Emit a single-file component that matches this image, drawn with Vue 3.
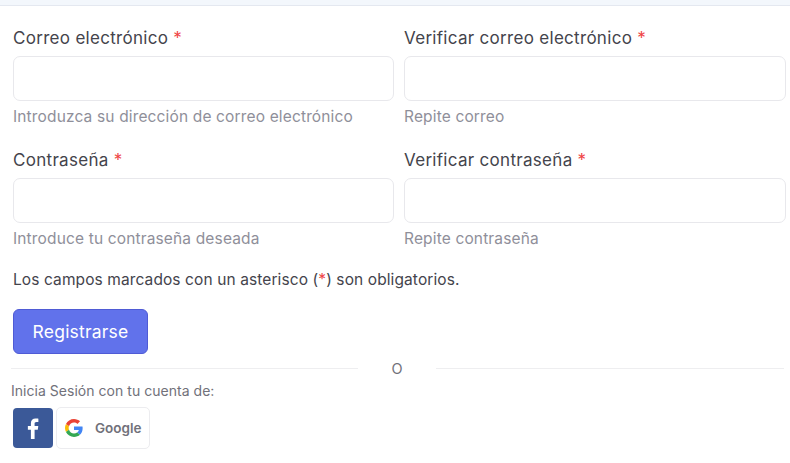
<template>
  <div class="page">
    <div class="top-strip"></div>
    <form class="register-form" @submit.prevent>
      <div class="form-grid">
        <div v-for="field in fields" :key="field.label" class="field">
          <label class="field-label">{{ field.label }} <span class="req">*</span></label>
          <input class="field-input" :type="field.type" />
          <p class="field-help">{{ field.help }}</p>
        </div>
      </div>
      <p class="required-note">Los campos marcados con un asterisco (<span class="req">*</span>) son obligatorios.</p>
      <button class="submit-btn" type="submit">Registrarse</button>
    </form>

    <div class="divider">
      <span class="line line-left"></span>
      <span class="divider-text">O</span>
      <span class="line line-right"></span>
    </div>

    <div class="social">
      <p class="social-title">Inicia Sesión con tu cuenta de:</p>
      <div class="social-buttons">
        <a class="fb-btn" href="#" aria-label="Facebook">
          <svg width="13" height="21" viewBox="0 0 15 25">
            <path fill="#fff" d="M4.4 25V14H.8V9.6h3.6V6.3C4.4 2.600 6.600.6 9.900.6c1.600 0 3 .1 3.400.2v3.900h-2.300c-1.800 0-2.200.9-2.200 2.100v2.800h4.400l-.6 4.400H8.800v11z" />
          </svg>
        </a>
        <a class="google-btn" href="#">
          <svg width="18" height="18" viewBox="0 0 48 48">
            <path fill="#EA4335" d="M24 9.5c3.500 0 6.700 1.200 9.200 3.600l6.900-6.900C35.900 2.400 30.400 0 24 0 14.600 0 6.500 5.400 2.600 13.200l8 6.200C12.500 13.600 17.800 9.500 24 9.500z" />
            <path fill="#4285F4" d="M47 24.500c0-1.600-.1-3.100-.4-4.500H24v9h12.900c-.6 3-2.200 5.500-4.700 7.200l7.700 6C44.400 37.900 47 31.800 47 24.500z" />
            <path fill="#FBBC05" d="M10.600 28.600c-.5-1.400-.8-3-.8-4.600s.3-3.200.8-4.600l-8-6.200C.9 16.500 0 20.100 0 24s.9 7.500 2.600 10.800z" />
            <path fill="#34A853" d="M24 48c6.500 0 11.900-2.100 15.900-5.800l-7.700-6c-2.200 1.500-4.900 2.300-8.200 2.300-6.200 0-11.500-4.100-13.400-9.900l-8 6.200C6.500 42.600 14.600 48 24 48z" />
          </svg>
          <span>Google</span>
        </a>
      </div>
    </div>
  </div>
</template>

<script setup>
const fields = [
  { label: 'Correo electrónico', help: 'Introduzca su dirección de correo electrónico', type: 'email' },
  { label: 'Verificar correo electrónico', help: 'Repite correo', type: 'email' },
  { label: 'Contraseña', help: 'Introduce tu contraseña deseada', type: 'password' },
  { label: 'Verificar contraseña', help: 'Repite contraseña', type: 'password' }
]
</script>

<style>
html,
body {
  margin: 0;
  background: #fff;
}
</style>

<style scoped>
.page {
  width: 790px;
  height: 463px;
  overflow: hidden;
  font-family: 'Inter', 'Noto Sans', sans-serif;
  color: #44444c;
}

.top-strip {
  height: 5px;
  background: #f3f7fc;
  border-bottom: 1px solid #e4e8f0;
}

.register-form {
  padding: 20px 4px 0 13px;
}

.form-grid {
  display: grid;
  grid-template-columns: 381px 382px;
  column-gap: 10px;
  row-gap: 22px;
}

.field-label {
  display: block;
  height: 24px;
  margin-bottom: 6px;
  font-size: 17px;
  line-height: 24px;
  letter-spacing: 0.3px;
}

.req {
  color: #ef4444;
}

.field-input {
  display: block;
  box-sizing: border-box;
  width: 100%;
  height: 45px;
  border: 1px solid #e8e8ec;
  border-radius: 7px;
  background: #fff;
}

.field-help {
  margin: 7px 0 0;
  font-size: 15.5px;
  line-height: 18px;
  letter-spacing: 0.15px;
  color: #8f8f9a;
}

.required-note {
  margin: 22px 0 0;
  font-size: 15.5px;
  line-height: 20px;
  letter-spacing: 0.1px;
}

.submit-btn {
  display: block;
  width: 135px;
  height: 45px;
  margin-top: 19px;
  border: 1px solid #4f5bd5;
  border-radius: 6px;
  background: #6172eb;
  color: #fff;
  font-family: inherit;
  font-size: 17.5px;
  letter-spacing: 0.2px;
}

.divider {
  display: flex;
  align-items: center;
  height: 18px;
  margin-top: 5px;
  padding-left: 11px;
}

.line {
  height: 1px;
  background: #eeeef0;
}

.line-left {
  width: 347px;
}

.line-right {
  width: 348px;
}

.divider-text {
  width: 78px;
  text-align: center;
  font-size: 14.5px;
  color: #71717a;
}

.social {
  padding-left: 11px;
}

.social-title {
  margin: 5px 0 0;
  font-size: 14px;
  line-height: 18px;
  letter-spacing: 0.03px;
  color: #71717a;
}

.social-buttons {
  display: flex;
  align-items: center;
  gap: 3px;
  margin-top: 7px;
  padding-left: 2px;
}

.fb-btn {
  display: flex;
  align-items: center;
  justify-content: center;
  width: 40px;
  height: 40px;
  border-radius: 4px;
  background: #3b5998;
}

.google-btn {
  display: flex;
  align-items: center;
  gap: 12px;
  box-sizing: border-box;
  width: 94px;
  height: 42px;
  padding-left: 8px;
  border: 1px solid #ececef;
  border-radius: 5px;
  color: #71717a;
  font-size: 13.5px;
  font-weight: 600;
  text-decoration: none;
}
</style>
